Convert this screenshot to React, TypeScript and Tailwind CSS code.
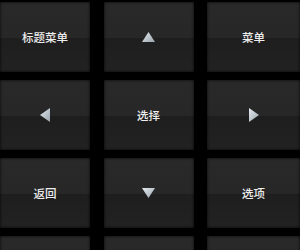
import React from "react";

type Cell = { label?: string; arrow?: "up" | "down" | "left" | "right" };

const cells: Cell[] = [
  { label: "标题菜单" },
  { arrow: "up" },
  { label: "菜单" },
  { arrow: "left" },
  { label: "选择" },
  { arrow: "right" },
  { label: "返回" },
  { arrow: "down" },
  { label: "选项" },
  {},
  {},
  {},
];

function Arrow({ dir }: { dir: "up" | "down" | "left" | "right" }) {
  const pts: Record<string, string> = {
    up: "6.5,0 13,10 0,10",
    down: "0,0 13,0 6.5,10",
    left: "10,0 10,14 0,7",
    right: "0,0 10,7 0,14",
  };
  const horiz = dir === "up" || dir === "down";
  return (
    <svg
      width={horiz ? 13 : 10}
      height={horiz ? 10 : 14}
      viewBox={horiz ? "0 0 13 10" : "0 0 10 14"}
    >
      <defs>
        <linearGradient id={"g" + dir} x1="0" y1="0" x2="1" y2="1">
          <stop offset="0" stopColor="#e4eaf0" />
          <stop offset="1" stopColor="#9aa4ad" />
        </linearGradient>
      </defs>
      <polygon points={pts[dir]} fill={`url(#g${dir})`} />
    </svg>
  );
}

export default function App() {
  return (
    <div
      className="w-[300px] h-[250px] bg-black overflow-hidden pt-[2px]"
      style={{ fontFamily: '"Noto Sans CJK SC", "Noto Sans", sans-serif' }}
    >
      <div className="grid grid-cols-[90px_90px_93px] auto-rows-[70px] gap-x-[13.5px] gap-y-[8px]">
        {cells.map((c, i) => (
          <div
            key={i}
            className="relative flex items-center justify-center bg-[linear-gradient(to_bottom,#292929_0%,#272727_52%,#1e1e1e_52%,#222222_100%)] shadow-[inset_0_0_3px_rgba(0,0,0,0.9)]"
          >
            {c.label && (
              <span className="text-[11.5px] font-medium leading-none text-[#ededed] mt-[1px]">
                {c.label}
              </span>
            )}
            {c.arrow && <Arrow dir={c.arrow} />}
          </div>
        ))}
      </div>
    </div>
  );
}
